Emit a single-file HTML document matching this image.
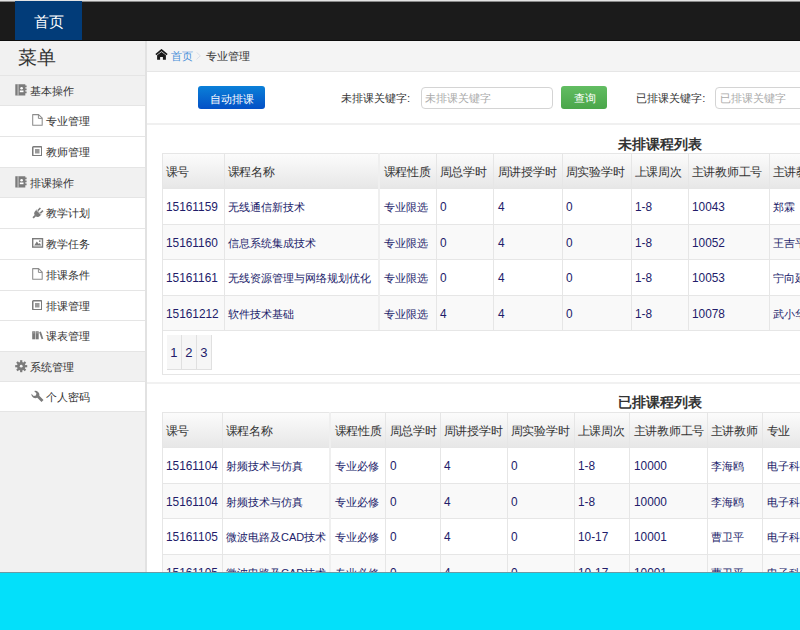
<!DOCTYPE html><html><head><meta charset="utf-8"><style>
*{box-sizing:border-box;margin:0;padding:0}
html,body{width:800px;height:630px;overflow:hidden;background:#fff;font-family:"Liberation Sans",sans-serif;color:#333}
div,span{position:absolute}
.t{white-space:nowrap}
.mi{left:0;width:145px;border-bottom:1px solid #e5e5e5}
.g{background:#f1f1f1}
.s{background:#fff}
.ml{font-size:11.2px;color:#333;line-height:14px}
.hl{height:1px;background:#e6e6e6}
.vl{width:1px;background:#e4e4e4}
.th{letter-spacing:-0.25px;font-size:12px;color:#333;line-height:14px}
.tdc{font-size:11px;color:#221c6a;line-height:14px}
.tdn{font-size:11.85px;color:#221c6a;line-height:14px}
.ic{fill:#7a7a7a}
</style></head><body>
<div style="left:0;top:0;width:800px;height:1px;background:#e4e4e4"></div>
<div style="left:0;top:1px;width:800px;height:1px;background:#8a8a8a"></div>
<div style="left:0;top:2px;width:800px;height:39px;background:#1b1b1b"></div>
<div style="left:0;top:40px;width:800px;height:1px;background:#0c0c0c"></div>
<div style="left:15px;top:1px;width:67px;height:39px;background:#023c79"></div>
<span class="t" style="left:34px;top:13px;font-size:15px;line-height:18px;color:#fff">首页</span>
<div style="left:0;top:41px;width:145px;height:532px;background:#f1f1f1"></div>
<div style="left:145px;top:41px;width:2px;height:532px;background:#e2e2e2"></div>
<span class="t" style="left:17.6px;top:46px;font-size:19px;line-height:24px;color:#333">菜单</span>
<div style="left:0;top:75px;width:145px;height:1px;background:#e5e5e5"></div>
<div class="mi g" style="top:76px;height:30px"></div>
<span class="t ml" style="left:30px;top:84px">基本操作</span>
<div class="mi s" style="top:106px;height:31px"></div>
<span class="t ml" style="left:46px;top:114px">专业管理</span>
<div class="mi s" style="top:137px;height:31px"></div>
<span class="t ml" style="left:46px;top:145px">教师管理</span>
<div class="mi g" style="top:168px;height:30px"></div>
<span class="t ml" style="left:30px;top:176px">排课操作</span>
<div class="mi s" style="top:198px;height:31px"></div>
<span class="t ml" style="left:46px;top:206px">教学计划</span>
<div class="mi s" style="top:229px;height:31px"></div>
<span class="t ml" style="left:46px;top:237px">教学任务</span>
<div class="mi s" style="top:260px;height:31px"></div>
<span class="t ml" style="left:46px;top:268px">排课条件</span>
<div class="mi s" style="top:291px;height:30px"></div>
<span class="t ml" style="left:46px;top:299px">排课管理</span>
<div class="mi s" style="top:321px;height:31px"></div>
<span class="t ml" style="left:46px;top:329px">课表管理</span>
<div class="mi g" style="top:352px;height:30px"></div>
<span class="t ml" style="left:30px;top:360px">系统管理</span>
<div class="mi s" style="top:382px;height:30px"></div>
<span class="t ml" style="left:46px;top:390px">个人密码</span>
<svg style="position:absolute;left:15px;top:84px" width="12" height="12" viewBox="0 0 12 12"><path d="M0.3 0.2H10.3V1.6H11.6V3.2H10.3V4.6H11.6V6.2H10.3V7.6H11.6V9.2H10.3V11.6H0.3Z" fill="#7b7b7b"/><rect x="2.6" y="0.2" width="0.9" height="11.4" fill="#d8d8d8"/><circle cx="6.6" cy="4.3" r="1.3" fill="#fff"/><rect x="4.8" y="6.5" width="3.7" height="1.7" fill="#fff"/></svg>
<svg style="position:absolute;left:32px;top:114px" width="11" height="12" viewBox="0 0 11 12"><path d="M0.7 0.6H6.6L10.2 4.2V11.3H0.7Z" fill="#fff" stroke="#8c8c8c" stroke-width="1.05" stroke-linejoin="round"/><path d="M6.4 0.6V4.4H10.2" fill="none" stroke="#8c8c8c" stroke-width="1"/></svg>
<svg style="position:absolute;left:31.8px;top:145.6px" width="10.5" height="10.5" viewBox="0 0 10.5 10.5"><rect x="0.75" y="0.75" width="9" height="9" rx="0.8" fill="#fff" stroke="#7b7b7b" stroke-width="1.5"/><rect x="3" y="3" width="4.5" height="4.5" fill="#9a9a9a"/></svg>
<svg style="position:absolute;left:15px;top:176px" width="12" height="12" viewBox="0 0 12 12"><path d="M0.3 0.2H10.3V1.6H11.6V3.2H10.3V4.6H11.6V6.2H10.3V7.6H11.6V9.2H10.3V11.6H0.3Z" fill="#7b7b7b"/><rect x="2.6" y="0.2" width="0.9" height="11.4" fill="#d8d8d8"/><circle cx="6.6" cy="4.3" r="1.3" fill="#fff"/><rect x="4.8" y="6.5" width="3.7" height="1.7" fill="#fff"/></svg>
<svg style="position:absolute;left:31.5px;top:206.5px" width="12" height="12" viewBox="0 0 12 12"><g transform="rotate(45 6 6)"><path d="M2.6 4.6H9.4V6.4A3.4 3.4 0 0 1 2.6 6.4Z" fill="#7b7b7b"/><rect x="3.4" y="0.8" width="1.6" height="3.8" fill="#7b7b7b"/><rect x="7" y="0.8" width="1.6" height="3.8" fill="#7b7b7b"/><rect x="5.1" y="9.4" width="1.8" height="3.6" fill="#7b7b7b"/><rect x="2.6" y="4.6" width="6.8" height="0.7" fill="#ddd"/></g></svg>
<svg style="position:absolute;left:31.5px;top:238px" width="12" height="10" viewBox="0 0 12 10"><rect x="0.7" y="0.7" width="9.8" height="8.4" fill="#fff" stroke="#7b7b7b" stroke-width="1.4"/><path d="M2.2 7.6L4.8 3.4L6.8 6L7.8 5L9.2 7.6Z" fill="#7b7b7b"/><circle cx="7.8" cy="3.1" r="0.9" fill="#7b7b7b"/></svg>
<svg style="position:absolute;left:32px;top:268px" width="11" height="12" viewBox="0 0 11 12"><path d="M0.7 0.6H6.6L10.2 4.2V11.3H0.7Z" fill="#fff" stroke="#8c8c8c" stroke-width="1.05" stroke-linejoin="round"/><path d="M6.4 0.6V4.4H10.2" fill="none" stroke="#8c8c8c" stroke-width="1"/></svg>
<svg style="position:absolute;left:31.8px;top:299.6px" width="10.5" height="10.5" viewBox="0 0 10.5 10.5"><rect x="0.75" y="0.75" width="9" height="9" rx="0.8" fill="#fff" stroke="#7b7b7b" stroke-width="1.5"/><rect x="3" y="3" width="4.5" height="4.5" fill="#9a9a9a"/></svg>
<svg style="position:absolute;left:31.5px;top:330.5px" width="12" height="9" viewBox="0 0 12 9"><rect x="0.2" y="0.3" width="3" height="8" fill="#7b7b7b"/><rect x="3.7" y="0.3" width="3" height="8" fill="#7b7b7b"/><path d="M7.2 1.2L8.9 0.6L11.3 7.8L9.6 8.3Z" fill="#7b7b7b"/><rect x="0.8" y="1.6" width="1.8" height="0.6" fill="#ccc"/><rect x="4.3" y="1.6" width="1.8" height="0.6" fill="#ccc"/></svg>
<svg style="position:absolute;left:14.5px;top:359.5px" width="13" height="13" viewBox="0 0 13 13"><rect x="5.1" y="0.2" width="2.2" height="12" fill="#7b7b7b" transform="rotate(0 6.2 6.2)"/><rect x="5.1" y="0.2" width="2.2" height="12" fill="#7b7b7b" transform="rotate(45 6.2 6.2)"/><rect x="5.1" y="0.2" width="2.2" height="12" fill="#7b7b7b" transform="rotate(90 6.2 6.2)"/><rect x="5.1" y="0.2" width="2.2" height="12" fill="#7b7b7b" transform="rotate(135 6.2 6.2)"/><circle cx="6.2" cy="6.2" r="4.2" fill="#7b7b7b"/><circle cx="6.2" cy="6.2" r="1.4" fill="#f1f1f1"/></svg>
<svg style="position:absolute;left:30.8px;top:389.6px" width="13" height="13" viewBox="0 0 13 13"><path d="M0.4 3.7L2.7 6L4.9 5.6L5.4 3.3L3.1 1A4.1 4.1 0 0 1 8.3 5.8L12.5 10L10.5 12L6.3 7.8A4.1 4.1 0 0 1 0.4 3.7Z" fill="#7b7b7b"/></svg>
<div style="left:147px;top:41px;width:653px;height:30px;background:#f4f4f4"></div>
<div style="left:147px;top:71px;width:653px;height:1px;background:#e6e6e6"></div>
<span class="t" style="left:171px;top:49px;font-size:11.2px;line-height:14px;color:#4a90d9">首页</span>
<span class="t" style="left:205.5px;top:49px;font-size:11.2px;line-height:14px;color:#333">专业管理</span>
<svg style="position:absolute;left:155px;top:49px" width="13" height="11" viewBox="0 0 13 11"><polyline points="0.9,5.6 6.5,1 12.1,5.6" fill="none" stroke="#1a1a1a" stroke-width="1.7"/><path d="M2.1 6.2L6.5 3L10.9 6.2V10.7H7.9V8H5.1V10.7H2.1Z" fill="#1a1a1a"/></svg>
<svg style="position:absolute;left:196px;top:52px" width="5" height="8" viewBox="0 0 5 8"><polyline points="0.5,0.3 4.3,3.8 0.5,7.4" fill="none" stroke="#d4dbe6" stroke-width="0.9"/></svg>
<div style="left:147px;top:123px;width:653px;height:2px;background:#f0f0f0"></div>
<div style="left:198px;top:86px;width:67px;height:23px;border-radius:3px;background:linear-gradient(#0a80d8,#0450c6)"></div>
<span class="t" style="left:210px;top:91.5px;font-size:11px;line-height:14px;color:#fff">自动排课</span>
<span class="t" style="left:341px;top:91px;font-size:11.2px;line-height:14px;color:#333">未排课关键字:</span>
<div style="left:421px;top:87px;width:132px;height:22px;border:1px solid #d4d4d4;border-radius:4px;background:#fff"></div>
<span class="t" style="left:424.5px;top:91px;font-size:11.2px;line-height:14px;color:#aaa">未排课关键字</span>
<div style="left:561px;top:86px;width:46px;height:23px;border-radius:3px;background:linear-gradient(#62bd62,#4aa64a)"></div>
<span class="t" style="left:574px;top:91px;font-size:11.2px;line-height:14px;color:#fff">查询</span>
<span class="t" style="left:636.3px;top:91px;font-size:11.2px;line-height:14px;color:#333">已排课关键字:</span>
<div style="left:715px;top:87px;width:120px;height:22px;border:1px solid #d4d4d4;border-radius:4px;background:#fff"></div>
<span class="t" style="left:720px;top:91px;font-size:11.2px;line-height:14px;color:#aaa">已排课关键字</span>
<span class="t" style="left:618px;top:136px;font-size:14.2px;font-weight:bold;line-height:17px;color:#333">未排课程列表</span>
<div style="left:162px;top:153px;width:638px;height:35px;background:linear-gradient(#fcfcfc,#e7e7e7)"></div>
<div style="left:162px;top:224px;width:638px;height:35px;background:#f9f9f9"></div>
<div style="left:162px;top:295px;width:638px;height:35px;background:#f9f9f9"></div>
<div class="hl" style="left:162px;top:153px;width:638px"></div>
<div class="hl" style="left:162px;top:188px;width:638px"></div>
<div class="hl" style="left:162px;top:224px;width:638px"></div>
<div class="hl" style="left:162px;top:259px;width:638px"></div>
<div class="hl" style="left:162px;top:295px;width:638px"></div>
<div class="hl" style="left:162px;top:330px;width:638px"></div>
<div style="left:162px;top:153px;width:1px;height:177px;background:#e6e6e6"></div>
<div style="left:224px;top:153px;width:1px;height:177px;background:#e6e6e6"></div>
<div style="left:378px;top:153px;width:2px;height:177px;background:#efefef"></div>
<div style="left:436px;top:153px;width:1px;height:177px;background:#e6e6e6"></div>
<div style="left:493px;top:153px;width:1px;height:177px;background:#e6e6e6"></div>
<div style="left:562px;top:153px;width:1px;height:177px;background:#e6e6e6"></div>
<div style="left:631px;top:153px;width:1px;height:177px;background:#e6e6e6"></div>
<div style="left:688px;top:153px;width:1px;height:177px;background:#e6e6e6"></div>
<div style="left:769px;top:153px;width:1px;height:177px;background:#e6e6e6"></div>
<span class="t th" style="left:165.6px;top:165.1px">课号</span>
<span class="t th" style="left:227.6px;top:165.1px">课程名称</span>
<span class="t th" style="left:383.6px;top:165.1px">课程性质</span>
<span class="t th" style="left:439.6px;top:165.1px">周总学时</span>
<span class="t th" style="left:497.6px;top:165.1px">周讲授学时</span>
<span class="t th" style="left:565.6px;top:165.1px">周实验学时</span>
<span class="t th" style="left:634.6px;top:165.1px">上课周次</span>
<span class="t th" style="left:691.6px;top:165.1px">主讲教师工号</span>
<span class="t th" style="left:772.6px;top:165.1px">主讲教师</span>
<span class="t tdn" style="left:166px;top:200.0px">15161159</span>
<span class="t tdc" style="left:228px;top:200.0px">无线通信新技术</span>
<span class="t tdc" style="left:384px;top:200.0px">专业限选</span>
<span class="t tdn" style="left:440px;top:200.0px">0</span>
<span class="t tdn" style="left:498px;top:200.0px">4</span>
<span class="t tdn" style="left:566px;top:200.0px">0</span>
<span class="t tdn" style="left:635px;top:200.0px">1-8</span>
<span class="t tdn" style="left:692px;top:200.0px">10043</span>
<span class="t tdc" style="left:773px;top:200.0px">郑霖</span>
<span class="t tdn" style="left:166px;top:235.5px">15161160</span>
<span class="t tdc" style="left:228px;top:235.5px">信息系统集成技术</span>
<span class="t tdc" style="left:384px;top:235.5px">专业限选</span>
<span class="t tdn" style="left:440px;top:235.5px">0</span>
<span class="t tdn" style="left:498px;top:235.5px">4</span>
<span class="t tdn" style="left:566px;top:235.5px">0</span>
<span class="t tdn" style="left:635px;top:235.5px">1-8</span>
<span class="t tdn" style="left:692px;top:235.5px">10052</span>
<span class="t tdc" style="left:773px;top:235.5px">王吉平</span>
<span class="t tdn" style="left:166px;top:271.0px">15161161</span>
<span class="t tdc" style="left:228px;top:271.0px">无线资源管理与网络规划优化</span>
<span class="t tdc" style="left:384px;top:271.0px">专业限选</span>
<span class="t tdn" style="left:440px;top:271.0px">0</span>
<span class="t tdn" style="left:498px;top:271.0px">4</span>
<span class="t tdn" style="left:566px;top:271.0px">0</span>
<span class="t tdn" style="left:635px;top:271.0px">1-8</span>
<span class="t tdn" style="left:692px;top:271.0px">10053</span>
<span class="t tdc" style="left:773px;top:271.0px">宁向延</span>
<span class="t tdn" style="left:166px;top:306.5px">15161212</span>
<span class="t tdc" style="left:228px;top:306.5px">软件技术基础</span>
<span class="t tdc" style="left:384px;top:306.5px">专业限选</span>
<span class="t tdn" style="left:440px;top:306.5px">4</span>
<span class="t tdn" style="left:498px;top:306.5px">4</span>
<span class="t tdn" style="left:566px;top:306.5px">0</span>
<span class="t tdn" style="left:635px;top:306.5px">1-8</span>
<span class="t tdn" style="left:692px;top:306.5px">10078</span>
<span class="t tdc" style="left:773px;top:306.5px">武小华</span>
<div class="vl" style="left:162px;top:330px;height:45px"></div>
<div class="hl" style="left:162px;top:374px;width:638px"></div>
<div style="left:167px;top:335px;width:15px;height:35px;background:#f6f6f6;border-right:1px solid #e0e0e0;border-bottom:1px solid #e0e0e0"></div>
<span class="t tdn" style="left:170.2px;top:346px;font-size:13px">1</span>
<div style="left:182px;top:335px;width:15px;height:35px;background:#f6f6f6;border-right:1px solid #e0e0e0;border-bottom:1px solid #e0e0e0"></div>
<span class="t tdn" style="left:185.2px;top:346px;font-size:13px">2</span>
<div style="left:197px;top:335px;width:15px;height:35px;background:#f6f6f6;border-right:1px solid #e0e0e0;border-bottom:1px solid #e0e0e0"></div>
<span class="t tdn" style="left:200.2px;top:346px;font-size:13px">3</span>
<div style="left:147px;top:382px;width:653px;height:2px;background:#f1f1f1"></div>
<span class="t" style="left:618px;top:394px;font-size:14.2px;font-weight:bold;line-height:17px;color:#333">已排课程列表</span>
<div style="left:162px;top:412px;width:638px;height:35px;background:linear-gradient(#fcfcfc,#e7e7e7)"></div>
<div style="left:162px;top:483px;width:638px;height:35px;background:#f9f9f9"></div>
<div style="left:162px;top:554px;width:638px;height:35px;background:#f9f9f9"></div>
<div class="hl" style="left:162px;top:412px;width:638px"></div>
<div class="hl" style="left:162px;top:447px;width:638px"></div>
<div class="hl" style="left:162px;top:483px;width:638px"></div>
<div class="hl" style="left:162px;top:518px;width:638px"></div>
<div class="hl" style="left:162px;top:554px;width:638px"></div>
<div class="hl" style="left:162px;top:589px;width:638px"></div>
<div style="left:162px;top:412px;width:1px;height:177px;background:#e6e6e6"></div>
<div style="left:222px;top:412px;width:1px;height:177px;background:#e6e6e6"></div>
<div style="left:329px;top:412px;width:2px;height:177px;background:#efefef"></div>
<div style="left:385px;top:412px;width:1px;height:177px;background:#e6e6e6"></div>
<div style="left:440px;top:412px;width:1px;height:177px;background:#e6e6e6"></div>
<div style="left:507px;top:412px;width:1px;height:177px;background:#e6e6e6"></div>
<div style="left:574px;top:412px;width:1px;height:177px;background:#e6e6e6"></div>
<div style="left:629px;top:412px;width:1px;height:177px;background:#e6e6e6"></div>
<div style="left:707px;top:412px;width:1px;height:177px;background:#e6e6e6"></div>
<div style="left:762px;top:412px;width:1px;height:177px;background:#e6e6e6"></div>
<span class="t th" style="left:165.6px;top:424.1px">课号</span>
<span class="t th" style="left:225.6px;top:424.1px">课程名称</span>
<span class="t th" style="left:334.6px;top:424.1px">课程性质</span>
<span class="t th" style="left:389.6px;top:424.1px">周总学时</span>
<span class="t th" style="left:443.6px;top:424.1px">周讲授学时</span>
<span class="t th" style="left:510.6px;top:424.1px">周实验学时</span>
<span class="t th" style="left:577.6px;top:424.1px">上课周次</span>
<span class="t th" style="left:633.6px;top:424.1px">主讲教师工号</span>
<span class="t th" style="left:710.6px;top:424.1px">主讲教师</span>
<span class="t th" style="left:766.6px;top:424.1px">专业</span>
<span class="t tdn" style="left:166px;top:459.0px">15161104</span>
<span class="t tdc" style="left:226px;top:459.0px">射频技术与仿真</span>
<span class="t tdc" style="left:335px;top:459.0px">专业必修</span>
<span class="t tdn" style="left:390px;top:459.0px">0</span>
<span class="t tdn" style="left:444px;top:459.0px">4</span>
<span class="t tdn" style="left:511px;top:459.0px">0</span>
<span class="t tdn" style="left:578px;top:459.0px">1-8</span>
<span class="t tdn" style="left:634px;top:459.0px">10000</span>
<span class="t tdc" style="left:711px;top:459.0px">李海鸥</span>
<span class="t tdc" style="left:767px;top:459.0px">电子科学与技术</span>
<span class="t tdn" style="left:166px;top:494.5px">15161104</span>
<span class="t tdc" style="left:226px;top:494.5px">射频技术与仿真</span>
<span class="t tdc" style="left:335px;top:494.5px">专业必修</span>
<span class="t tdn" style="left:390px;top:494.5px">0</span>
<span class="t tdn" style="left:444px;top:494.5px">4</span>
<span class="t tdn" style="left:511px;top:494.5px">0</span>
<span class="t tdn" style="left:578px;top:494.5px">1-8</span>
<span class="t tdn" style="left:634px;top:494.5px">10000</span>
<span class="t tdc" style="left:711px;top:494.5px">李海鸥</span>
<span class="t tdc" style="left:767px;top:494.5px">电子科学与技术</span>
<span class="t tdn" style="left:166px;top:530.0px">15161105</span>
<span class="t tdc" style="left:226px;top:530.0px">微波电路及CAD技术</span>
<span class="t tdc" style="left:335px;top:530.0px">专业必修</span>
<span class="t tdn" style="left:390px;top:530.0px">0</span>
<span class="t tdn" style="left:444px;top:530.0px">4</span>
<span class="t tdn" style="left:511px;top:530.0px">0</span>
<span class="t tdn" style="left:578px;top:530.0px">10-17</span>
<span class="t tdn" style="left:634px;top:530.0px">10001</span>
<span class="t tdc" style="left:711px;top:530.0px">曹卫平</span>
<span class="t tdc" style="left:767px;top:530.0px">电子科学与技术</span>
<span class="t tdn" style="left:166px;top:565.5px">15161105</span>
<span class="t tdc" style="left:226px;top:565.5px">微波电路及CAD技术</span>
<span class="t tdc" style="left:335px;top:565.5px">专业必修</span>
<span class="t tdn" style="left:390px;top:565.5px">0</span>
<span class="t tdn" style="left:444px;top:565.5px">4</span>
<span class="t tdn" style="left:511px;top:565.5px">0</span>
<span class="t tdn" style="left:578px;top:565.5px">10-17</span>
<span class="t tdn" style="left:634px;top:565.5px">10001</span>
<span class="t tdc" style="left:711px;top:565.5px">曹卫平</span>
<span class="t tdc" style="left:767px;top:565.5px">电子科学与技术</span>
<div style="left:0;top:572px;width:800px;height:1px;background:#6a9aa4"></div>
<div style="left:0;top:573px;width:800px;height:57px;background:#03e0fa"></div>
</body></html>
